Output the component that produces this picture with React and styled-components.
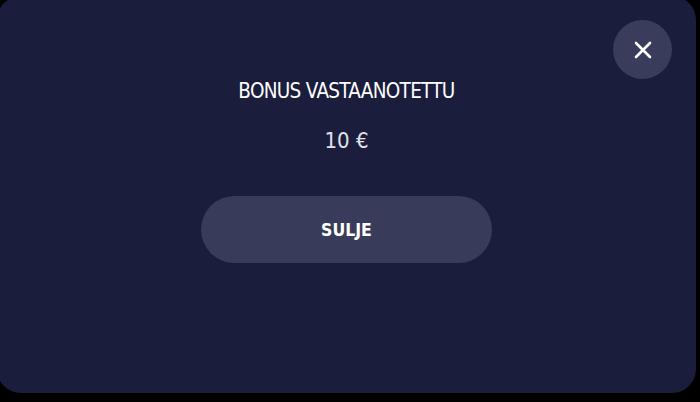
import styled, { createGlobalStyle } from 'styled-components';

const Global = createGlobalStyle`
html, body { margin: 0; padding: 0; background: #000; overflow: hidden; }
body { width: 700px; height: 402px; }
`;

const Panel = styled.div`
position: relative;
box-sizing: border-box;
margin: -4px 0 0 -3px;
width: 699px;
height: 397px;
background: #1b1d3d;
border-radius: 24px;
display: flex;
flex-direction: column;
align-items: center;
padding-top: 82px;
font-family: "DejaVu Sans Condensed", "DejaVu Sans", sans-serif;
color: #fff;
`;

const CloseBtn = styled.button`
position: absolute;
top: 24px;
right: 24px;
width: 59px;
height: 59px;
border-radius: 50%;
border: none;
background: #3a3c5c;
display: flex;
align-items: center;
justify-content: center;
padding: 0;
cursor: pointer;
`;

const Title = styled.div`
font-size: 20.5px;
line-height: 26px;
letter-spacing: -0.7px;
`;

const Amount = styled.div`
margin-top: 23px;
font-size: 22px;
line-height: 28px;
font-weight: 300;
color: #e2e2ec;
`;

const Action = styled.button`
margin-top: 41px;
width: 291px;
height: 67px;
border-radius: 34px;
border: none;
background: #393b5a;
color: #fff;
font-family: inherit;
font-size: 17.5px;
font-weight: bold;
cursor: pointer;
`;

export default function App() {
return (
<>
<Global />
<Panel>
<CloseBtn aria-label="close">
<svg width="18" height="18" viewBox="0 0 18 18">
<path d="M2 2 L16 16 M16 2 L2 16" stroke="#fff" strokeWidth="2.6" strokeLinecap="round" />
</svg>
</CloseBtn>
<Title>BONUS VASTAANOTETTU</Title>
<Amount>10 €</Amount>
<Action>SULJE</Action>
</Panel>
</>
);
}
